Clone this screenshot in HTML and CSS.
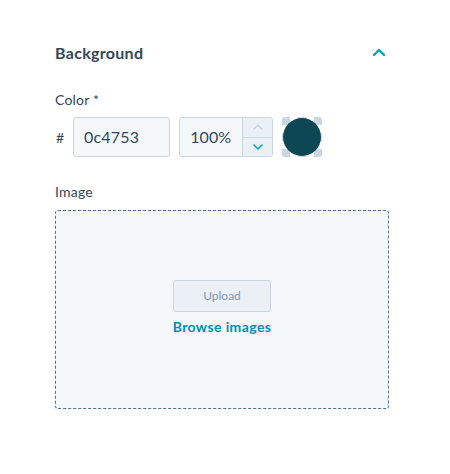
FILE: index.html
```html
<!DOCTYPE html>
<html>
<head>
<meta charset="utf-8">
<link rel="stylesheet" href="styles.css">
</head>
<body>
<div class="panel">
  <div class="header">
    <h2 class="title">Background</h2>
    <svg class="chev" width="14" height="10" viewBox="0 0 14 10"><path d="M2 8 L7 3 L12 8" fill="none" stroke="#00a4bd" stroke-width="2.4" stroke-linecap="round" stroke-linejoin="round"/></svg>
  </div>
  <div class="label">Color *</div>
  <div class="color-row">
    <span class="hash">#</span>
    <div class="input hex">0c4753</div>
    <div class="input pct">
      <span class="pct-val">100%</span>
      <div class="stepper">
        <div class="step"><svg width="12" height="8" viewBox="0 0 12 8"><path d="M2 6 L6 2 L10 6" fill="none" stroke="#cbd6e2" stroke-width="1.6" stroke-linecap="round" stroke-linejoin="round"/></svg></div>
        <div class="step down"><svg width="12" height="8" viewBox="0 0 12 8"><path d="M2 2 L6 6 L10 2" fill="none" stroke="#00a4bd" stroke-width="1.6" stroke-linecap="round" stroke-linejoin="round"/></svg></div>
      </div>
    </div>
    <div class="swatch"><div class="dot"></div></div>
  </div>
  <div class="label image-label">Image</div>
  <div class="drop">
    <div class="upload">Upload</div>
    <div class="browse">Browse images</div>
  </div>
</div>
</body>
</html>
```
FILE: styles.css
```css
html, body {
  margin: 0;
  padding: 0;
  background: #fff;
}
body {
  font-family: Lato, "Noto Sans", sans-serif;
  color: #33475b;
}
.panel {
  width: 334px;
  padding: 41px 0 0 55px;
}
.header {
  display: flex;
  align-items: center;
  justify-content: space-between;
  height: 22px;
  padding-right: 3px;
}
.title {
  margin: 0;
  font-size: 16px;
  font-weight: 700;
  color: #33475b;
  letter-spacing: 0.3px;
}
.chev {
  display: block;
}
.label {
  font-size: 14px;
  margin-top: 27px;
  height: 20px;
  line-height: 20px;
  letter-spacing: 0.2px;
}
.color-row {
  display: flex;
  align-items: center;
  margin-top: 7px;
  height: 40px;
}
.hash {
  font-size: 14px;
  width: 17px;
  padding-left: 1px;
}
.input {
  box-sizing: border-box;
  height: 40px;
  border: 1px solid #cbd6e2;
  border-radius: 3px;
  background: #f5f8fa;
  font-size: 16px;
  color: #33475b;
}
.hex {
  width: 97px;
  padding-left: 10px;
  line-height: 38px;
  letter-spacing: 0.2px;
}
.pct {
  width: 94px;
  margin-left: 9px;
  display: flex;
  overflow: hidden;
}
.pct-val {
  flex: 1;
  text-align: right;
  line-height: 38px;
  padding-right: 11px;
}
.stepper {
  width: 29px;
  border-left: 1px solid #cbd6e2;
  background: #eaf0f6;
  display: flex;
  flex-direction: column;
}
.step {
  flex: 1;
  display: flex;
  align-items: center;
  justify-content: center;
}
.step.down {
  border-top: 1px solid #cbd6e2;
}
.step svg {
  display: block;
}
.swatch {
  width: 40px;
  height: 40px;
  margin-left: 9px;
  border-radius: 3px;
  background: conic-gradient(#fff 0 25%, #cbd6e2 0 50%, #fff 0 75%, #cbd6e2 0) 0 0 / 16px 16px;
  display: flex;
  align-items: center;
  justify-content: center;
}
.dot {
  width: 38px;
  height: 38px;
  border-radius: 50%;
  background: #0c4753;
}
.image-label {
  margin-top: 25px;
}
.drop {
  box-sizing: border-box;
  margin-top: 8px;
  width: 334px;
  height: 199px;
  border: 1px dashed #516f90;
  border-radius: 3px;
  background: #f5f8fa;
  display: flex;
  flex-direction: column;
  align-items: center;
  justify-content: center;
  padding-bottom: 5px;
}
.upload {
  box-sizing: border-box;
  width: 98px;
  height: 32px;
  line-height: 30px;
  text-align: center;
  border: 1px solid #cbd6e2;
  border-radius: 3px;
  background: #eaf0f6;
  color: #7c98b6;
  font-size: 12px;
}
.browse {
  margin-top: 6px;
  font-size: 14px;
  font-weight: 700;
  color: #0091ae;
  letter-spacing: 0.4px;
}
```
